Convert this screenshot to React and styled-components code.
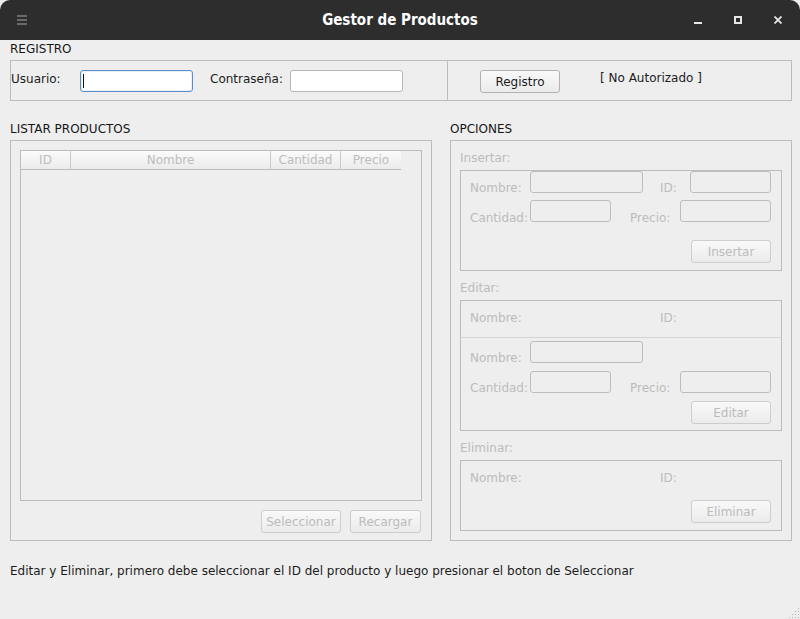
import styled, { createGlobalStyle } from "styled-components";

// ▼ グローバル
const GlobalStyle = createGlobalStyle`
    html, body {
        margin: 0;
        padding: 0;
        background: #eeeeee;
    }
    body {
        font-family: "DejaVu Sans", "Liberation Sans", sans-serif;
        font-size: 12px;
        color: #1c1c1c;
    }
`;

const Window = styled.div`
    position: relative;
    width: 800px;
    height: 619px;
    display: flex;
    flex-direction: column;
    background: #eeeeee;
    overflow: hidden;
`;

const TitleBar = styled.div`
    height: 40px;
    flex: none;
    display: grid;
    grid-template-columns: 1fr auto 1fr;
    align-items: center;
    background: #2d2d2d;
    border-radius: 10px 10px 0 0;
`;

const TitleText = styled.div`
    color: #ffffff;
    font-family: "DejaVu Sans Condensed", "DejaVu Sans", sans-serif;
    font-weight: bold;
    font-size: 15px;
    line-height: 18px;
`;

const MenuIcon = styled.svg`
    margin-left: 17px;
    display: block;
`;

const Controls = styled.div`
    display: flex;
    justify-content: flex-end;
    gap: 32px;
    padding-right: 18px;

    svg {
        display: block;
    }
`;

const Content = styled.div`
    flex: 1;
    display: flex;
    flex-direction: column;
    padding: 0 8px 0 10px;
`;

const SectionTitle = styled.div`
    line-height: 16px;
    padding-top: 1px;
    margin-top: ${(p) => p.$top || 0}px;
    margin-bottom: 3px;
    color: #161616;
`;

const RegPanel = styled.div`
    height: 41px;
    box-sizing: border-box;
    display: flex;
    border: 1px solid #bcbcbc;
`;

const RegLeft = styled.div`
    width: 436px;
    border-right: 1px solid #bcbcbc;
    display: flex;
    align-items: flex-start;
    padding-top: 9px;
`;

const RegRight = styled.div`
    flex: 1;
    display: flex;
    align-items: flex-start;
    padding-top: 9px;
`;

const RegLabel = styled.span`
    width: ${(p) => p.$w}px;
    margin-left: ${(p) => p.$ml || 0}px;
    margin-top: 1px;
    line-height: 16px;
    white-space: nowrap;
`;

const TextBox = styled.input`
    box-sizing: border-box;
    width: ${(p) => p.$w}px;
    height: 22px;
    margin: 0;
    padding: 0 3px;
    border: 1px solid #b6b6b6;
    border-radius: 3px;
    background: #ffffff;
    font: inherit;
    outline: none;
    caret-color: transparent;
`;

const FocusWrap = styled.div`
    position: relative;
`;

const FocusBox = styled(TextBox)`
    border-color: #5b8ec9;
    box-shadow: inset 0 0 0 1px rgba(91, 142, 201, 0.15);
`;

const Caret = styled.span`
    position: absolute;
    left: 3px;
    top: 4px;
    width: 1px;
    height: 14px;
    background: #111;
`;

const PushButton = styled.button`
    box-sizing: border-box;
    width: ${(p) => p.$w || 80}px;
    height: 23px;
    margin: 0;
    padding: 0;
    border: 1px solid ${(p) => (p.disabled ? "#cdcdcd" : "#b2b2b2")};
    border-radius: 3px;
    background: linear-gradient(#f9f9f9, #ebebeb);
    color: ${(p) => (p.disabled ? "#bcbcbc" : "#1c1c1c")};
    font: inherit;
    line-height: 20px;
`;

const RegButtonSlot = styled.div`
    margin-left: 32px;
`;

const StatusText = styled.span`
    margin-left: 40px;
    line-height: 16px;
    color: #1c1c1c;
`;

const Columns = styled.div`
    display: flex;
    gap: 18px;
`;

const Column = styled.div`
    width: ${(p) => p.$w}px;
    display: flex;
    flex-direction: column;
`;

const Panel = styled.div`
    box-sizing: border-box;
    height: 401px;
    border: 1px solid #bcbcbc;
    display: flex;
    flex-direction: column;
    padding: ${(p) => p.$pad || "9px 9px 7px 9px"};
`;

const Table = styled.div`
    flex: 1;
    border: 1px solid #bcbcbc;
`;

const HeaderRow = styled.div`
    display: flex;
    height: 19px;
    width: 380px;
    box-sizing: border-box;
    border-bottom: 1px solid #bdbdbd;
    background: linear-gradient(#fbfbfb, #ebebeb);
`;

const HeaderCell = styled.div`
    box-sizing: border-box;
    width: ${(p) => p.$w}px;
    border-right: ${(p) => (p.$last ? "none" : "1px solid #c9c9c9")};
    text-align: center;
    padding-top: 1px;
    line-height: 17px;
    color: #bdbdbd;
`;

const ButtonRow = styled.div`
    display: flex;
    justify-content: flex-end;
    gap: 9px;
    margin-top: 9px;
    padding-right: ${(p) => p.$pr || 0}px;
`;

const GroupLabel = styled.div`
    line-height: 16px;
    padding-top: 1px;
    margin-top: ${(p) => p.$top || 0}px;
    margin-bottom: 4px;
    color: #bcbcbc;
`;

const Box = styled.div`
    box-sizing: border-box;
    border: 1px solid #bcbcbc;
    border-top-color: ${(p) => p.$topColor || "#bcbcbc"};
    border-bottom-width: ${(p) => (p.$open ? 0 : 1)}px;
    height: ${(p) => p.$h}px;
    padding: ${(p) => p.$pt || 0}px 10px 0 9px;
    display: flex;
    flex-direction: column;
`;

const FieldRow = styled.div`
    display: flex;
    align-items: flex-start;
    height: ${(p) => p.$h}px;
    flex: none;
`;

const FieldLabel = styled.span`
    width: ${(p) => p.$w}px;
    margin-left: ${(p) => p.$ml || 0}px;
    margin-top: ${(p) => p.$mt ?? 9}px;
    line-height: 16px;
    white-space: nowrap;
    color: #bcbcbc;
`;

const DisabledBox = styled.input`
    box-sizing: border-box;
    width: ${(p) => p.$w}px;
    height: 22px;
    margin: 0;
    border: 1px solid #bdbdbd;
    border-radius: 3px;
    background: #eeeeee;
    font: inherit;
`;

const BoxButtons = styled.div`
    display: flex;
    justify-content: flex-end;
    margin-top: ${(p) => p.$mt || 0}px;
`;

const Footer = styled.div`
    margin-top: 22px;
    line-height: 16px;
    color: #1c1c1c;
`;

const Grip = styled.svg`
    position: absolute;
    right: 1px;
    bottom: 1px;
`;

const WindowIcon = ({ type }) => {
    if (type === "min") {
        return (
            <svg width="8" height="8" viewBox="0 0 8 8">
                <rect x="0" y="6" width="8" height="2" fill="#e6e6e6" />
            </svg>
        );
    }
    if (type === "max") {
        return (
            <svg width="8" height="8" viewBox="0 0 8 8">
                <rect x="1" y="1" width="6" height="6" fill="none" stroke="#e6e6e6" strokeWidth="2" />
            </svg>
        );
    }
    return (
        <svg width="8" height="8" viewBox="0 0 8 8">
            <path d="M0.5 0.5 L7.5 7.5 M7.5 0.5 L0.5 7.5" stroke="#e6e6e6" strokeWidth="1.8" />
        </svg>
    );
};

const gripDots = [];
for (let r = 0; r < 4; r++) {
    for (let c = 0; c < 4; c++) {
        if (r + c >= 3) gripDots.push({ x: c * 3, y: r * 3 });
    }
}

const headers = [
    { name: "ID", w: 50 },
    { name: "Nombre", w: 200 },
    { name: "Cantidad", w: 70 },
    { name: "Precio", w: 60 }
];

const App = () => {
    return (
        <>
            <GlobalStyle />
            <Window>
                <TitleBar>
                    <div>
                        <MenuIcon width="10" height="10" viewBox="0 0 10 10">
                            <rect x="0" y="0" width="10" height="2" fill="#6a6a6a" />
                            <rect x="0" y="4" width="10" height="2" fill="#6a6a6a" />
                            <rect x="0" y="8" width="10" height="2" fill="#6a6a6a" />
                        </MenuIcon>
                    </div>
                    <TitleText>Gestor de Productos</TitleText>
                    <Controls>
                        <WindowIcon type="min" />
                        <WindowIcon type="max" />
                        <WindowIcon type="close" />
                    </Controls>
                </TitleBar>

                <Content>
                    <SectionTitle>REGISTRO</SectionTitle>
                    <RegPanel>
                        <RegLeft>
                            <RegLabel $w={69}>Usuario:</RegLabel>
                            <FocusWrap>
                                <FocusBox $w={113} />
                                <Caret />
                            </FocusWrap>
                            <RegLabel $w={80} $ml={17}>Contraseña:</RegLabel>
                            <TextBox $w={113} type="password" />
                        </RegLeft>
                        <RegRight>
                            <RegButtonSlot>
                                <PushButton $w={80}>Registro</PushButton>
                            </RegButtonSlot>
                            <StatusText>[ No Autorizado ]</StatusText>
                        </RegRight>
                    </RegPanel>

                    <Columns>
                        {/* 左: 一覧 */}
                        <Column $w={422}>
                            <SectionTitle $top={19}>LISTAR PRODUCTOS</SectionTitle>
                            <Panel>
                                <Table>
                                    <HeaderRow>
                                        {headers.map((h, i) => (
                                            <HeaderCell key={h.name} $w={h.w} $last={i === headers.length - 1}>
                                                {h.name}
                                            </HeaderCell>
                                        ))}
                                    </HeaderRow>
                                </Table>
                                <ButtonRow $pr={1}>
                                    <PushButton $w={80} disabled>Seleccionar</PushButton>
                                    <PushButton $w={71} disabled>Recargar</PushButton>
                                </ButtonRow>
                            </Panel>
                        </Column>

                        {/* 右: オプション */}
                        <Column $w={342}>
                            <SectionTitle $top={19}>OPCIONES</SectionTitle>
                            <Panel $pad="8px 9px 9px 9px">
                                <GroupLabel>Insertar:</GroupLabel>
                                <Box $h={101}>
                                    <FieldRow $h={29}>
                                        <FieldLabel $w={60}>Nombre:</FieldLabel>
                                        <DisabledBox $w={113} disabled />
                                        <FieldLabel $w={30} $ml={17}>ID:</FieldLabel>
                                        <DisabledBox $w={81} disabled />
                                    </FieldRow>
                                    <FieldRow $h={40}>
                                        <FieldLabel $w={60} $mt={10}>Cantidad:</FieldLabel>
                                        <DisabledBox $w={81} disabled />
                                        <FieldLabel $w={50} $ml={19} $mt={10}>Precio:</FieldLabel>
                                        <DisabledBox $w={91} disabled />
                                    </FieldRow>
                                    <BoxButtons>
                                        <PushButton $w={80} disabled>Insertar</PushButton>
                                    </BoxButtons>
                                </Box>

                                <GroupLabel $top={8}>Editar:</GroupLabel>
                                <Box $h={37} $open $pt={0}>
                                    <FieldRow $h={36}>
                                        <FieldLabel $w={190}>Nombre:</FieldLabel>
                                        <FieldLabel $w={40}>ID:</FieldLabel>
                                    </FieldRow>
                                </Box>
                                <Box $h={94} $topColor="#d4d4d4" $pt={3}>
                                    <FieldRow $h={30}>
                                        <FieldLabel $w={60}>Nombre:</FieldLabel>
                                        <DisabledBox $w={113} disabled />
                                    </FieldRow>
                                    <FieldRow $h={30}>
                                        <FieldLabel $w={60}>Cantidad:</FieldLabel>
                                        <DisabledBox $w={81} disabled />
                                        <FieldLabel $w={50} $ml={19}>Precio:</FieldLabel>
                                        <DisabledBox $w={91} disabled />
                                    </FieldRow>
                                    <BoxButtons>
                                        <PushButton $w={80} disabled>Editar</PushButton>
                                    </BoxButtons>
                                </Box>

                                <GroupLabel $top={8}>Eliminar:</GroupLabel>
                                <Box $h={71}>
                                    <FieldRow $h={25}>
                                        <FieldLabel $w={190}>Nombre:</FieldLabel>
                                        <FieldLabel $w={40}>ID:</FieldLabel>
                                    </FieldRow>
                                    <BoxButtons $mt={14}>
                                        <PushButton $w={80} disabled>Eliminar</PushButton>
                                    </BoxButtons>
                                </Box>
                            </Panel>
                        </Column>
                    </Columns>

                    <Footer>
                        Editar y Eliminar, primero debe seleccionar el ID del producto y luego presionar el boton de Seleccionar
                    </Footer>
                </Content>

                <Grip width="11" height="11" viewBox="0 0 11 11">
                    {gripDots.map((d, i) => (
                        <rect key={i} x={d.x + 1} y={d.y + 1} width="1" height="1" fill="#b4b4b4" />
                    ))}
                </Grip>
            </Window>
        </>
    );
};

export default App;
